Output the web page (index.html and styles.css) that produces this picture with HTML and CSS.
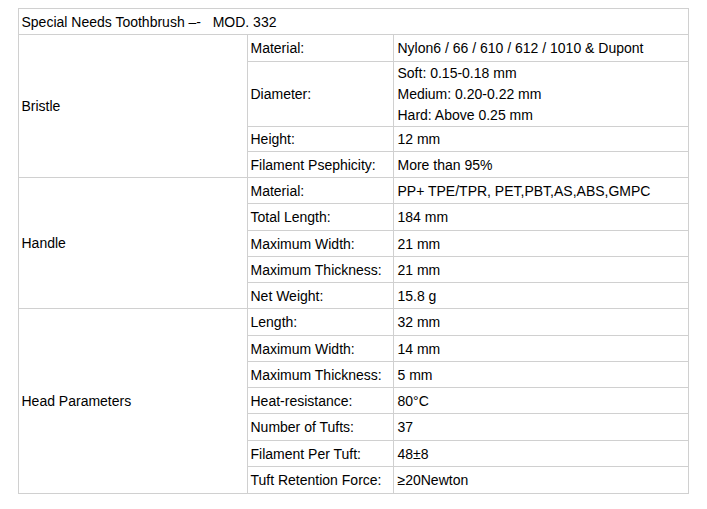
FILE: index.html
```html
<!DOCTYPE html>
<html>
<head>
<meta charset="utf-8">
<link rel="stylesheet" href="styles.css">
</head>
<body>
<table class="spec">
  <colgroup>
    <col class="c1"><col class="c2"><col class="c3">
  </colgroup>
  <tr class="r"><td colspan="3">Special Needs Toothbrush –-&nbsp;&nbsp; MOD. 332</td></tr>
  <tr class="r27"><td rowspan="4">Bristle</td><td>Material:</td><td class="val">Nylon6 / 66 / 610 / 612 / 1010 &amp; Dupont</td></tr>
  <tr class="tall"><td>Diameter:</td><td class="val multi">Soft: 0.15-0.18 mm<br>Medium: 0.20-0.22 mm<br>Hard: Above 0.25 mm</td></tr>
  <tr class="r25"><td>Height:</td><td class="val">12 mm</td></tr>
  <tr class="r"><td>Filament Psephicity:</td><td class="val">More than 95%</td></tr>
  <tr class="r"><td rowspan="5">Handle</td><td>Material:</td><td class="val">PP+ TPE/TPR, PET,PBT,AS,ABS,GMPC</td></tr>
  <tr class="r27"><td>Total Length:</td><td class="val">184 mm</td></tr>
  <tr class="r"><td>Maximum Width:</td><td class="val">21 mm</td></tr>
  <tr class="r"><td>Maximum Thickness:</td><td class="val">21 mm</td></tr>
  <tr class="r"><td>Net Weight:</td><td class="val">15.8 g</td></tr>
  <tr class="r27"><td rowspan="7">Head Parameters</td><td>Length:</td><td class="val">32 mm</td></tr>
  <tr class="r"><td>Maximum Width:</td><td class="val">14 mm</td></tr>
  <tr class="r"><td>Maximum Thickness:</td><td class="val">5 mm</td></tr>
  <tr class="r"><td>Heat-resistance:</td><td class="val">80°C</td></tr>
  <tr class="r27"><td>Number of Tufts:</td><td class="val">37</td></tr>
  <tr class="r"><td>Filament Per Tuft:</td><td class="val">48±8</td></tr>
  <tr class="r27"><td>Tuft Retention Force:</td><td class="val">≥20Newton</td></tr>
</table>
</body>
</html>
```
FILE: styles.css
```css
html, body {
  margin: 0;
  background: #ffffff;
}
body {
  padding: 8px;
  font-family: "Liberation Sans", Arial, sans-serif;
  font-size: 14px;
  color: #000;
}
.spec {
  margin: 0 auto;
  width: 669px;
  border-collapse: collapse;
  table-layout: fixed;
}
.c1 { width: 229px; }
.c2 { width: 146px; }
.c3 { width: 294px; }
.spec td {
  border: 1px solid #d0d0d0;
  padding: 0 2px;
  vertical-align: middle;
  line-height: 16px;
  white-space: nowrap;
}
.spec td.val { padding-left: 3px; }
.r { height: 26px; }
.r27 { height: 27px; }
.r25 { height: 25px; }
.tall { height: 65px; }
.spec td.multi { line-height: 21px; }
```
